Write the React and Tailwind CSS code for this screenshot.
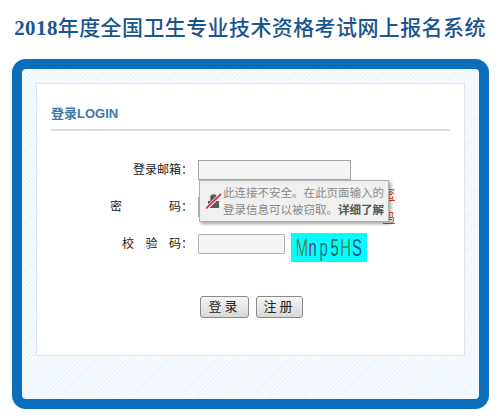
export default function App() {
  const cjk = { fontFamily: '"Noto Sans CJK SC", "Liberation Sans", sans-serif' };
  const letters = [
    ["M", "text-[#4f8a4f]"],
    ["n", "text-[#6a3a7a]"],
    ["p", "text-[#1f6f7f]"],
    ["5", "text-[#1f6a4a]"],
    ["H", "text-[#3a8a5a]"],
    ["S", "text-[#1f5a8a]"],
  ];
  return (
    <div className="w-[500px] h-[419px] bg-white overflow-hidden font-['Liberation_Sans','Noto_Sans_CJK_SC',sans-serif]">
      <h1 className="h-[59px] pt-[16px] text-center text-[21px] leading-[25px] font-medium tracking-[0.4px] text-[#1a5590] whitespace-nowrap font-['Liberation_Serif','Noto_Sans_CJK_SC',serif]">
        <span className="font-bold">2018</span>年度全国卫生专业技术资格考试网上报名系统
      </h1>
      <div className="ml-3 w-[477px] h-[350px] rounded-[14px] border-[10px] border-[#0a6ebd] shadow-[0_0_1px_#7fb3de] bg-[repeating-linear-gradient(135deg,#ebf3fb_0,#ebf3fb_1px,#f7fbff_1px,#f7fbff_3px)] px-[14px] pt-[14px]">
        <div className="h-[273px] bg-white border border-[#dde5ee] px-[14px] pt-[21px] text-[#222]">
          <div className="text-[13px] leading-[18px] font-bold text-[#3f77aa]">登录LOGIN</div>
          <div className="mt-[6px] h-[2px] bg-[#dddddd]" />
          <div className="relative">
            <div className="flex items-center mt-[29px] h-[20px]">
              <span className="w-[142px] text-right text-[12px] leading-[20px]">登录邮箱：</span>
              <div className="ml-[5px] w-[153px] h-[20px] bg-[#f4f4f4] border border-[#a8a8a8]" />
            </div>
            <div className="flex items-center mt-[17px] h-[20px]">
              <span className="w-[142px] flex justify-between pl-[59px] text-[12px] leading-[20px]">
                <span>密</span>
                <span>码：</span>
              </span>
              <div className="ml-[5px] w-[153px] h-[20px] bg-[#f4f4f4] border border-[#a8a8a8]" />
              <a className="ml-[32px] w-[12px] text-[12px] leading-[23px] text-[#e8401c] underline">密码</a>
            </div>
            <div className="flex items-center mt-[17px] h-[20px]">
              <span className="w-[142px] flex justify-between pl-[71px] text-[12px] leading-[20px]">
                <span>校</span>
                <span>验</span>
                <span>码：</span>
              </span>
              <div className="ml-[5px] w-[87px] h-[20px] bg-[#f4f4f4] border border-[#b4b4b4] rounded-[1px]" />
              <div className="ml-[6px] w-[76px] h-[29px] mt-[7px] bg-[#00ffff] flex items-center pl-[5px] text-[24px] leading-[29px]">
                {letters.map(([c, k], i) => (
                  <span key={i} className={`w-[11px] flex justify-center ${k}`}>
                    <span className="inline-block scale-x-[0.62]">{c}</span>
                  </span>
                ))}
              </div>
            </div>
            <div className="flex mt-[42px] ml-[149px] gap-[7px]">
              <button className="w-[49px] h-[22px] rounded-[3px] border border-[#8a8a8a] bg-gradient-to-b from-[#f6f6f6] to-[#d8d8d8] text-[13px] leading-[20px] tracking-[3px] text-[#222]">登录</button>
              <button className="w-[47px] h-[22px] rounded-[3px] border border-[#8a8a8a] bg-gradient-to-b from-[#f6f6f6] to-[#d8d8d8] text-[13px] leading-[20px] tracking-[3px] text-[#222]">注册</button>
            </div>
            <div className="absolute left-[148px] top-[20px] w-[190px] h-[42px] bg-[#f0f0f0] border border-[#b0b0b0] shadow-[2px_2px_3px_rgba(0,0,0,0.35)] flex items-center pl-[6px]">
              <svg width="16" height="16" viewBox="0 0 16 16" className="shrink-0">
                <path d="M2 8h11v7H2z" fill="#5a5a5a" />
                <path d="M5 8V4.5a2.5 2.5 0 0 1 5 0V8" fill="#5a5a5a" stroke="#5a5a5a" strokeWidth="1.5" />
                <path d="M0 16L15 1" stroke="#f0f0f0" strokeWidth="3.5" />
                <path d="M0 15.5L15 1" stroke="#ee2a55" strokeWidth="1.8" />
              </svg>
              <div style={cjk} className="ml-[1px] text-[11.5px] leading-[17px] text-[#8a8a8a] whitespace-nowrap">
                <div>此连接不安全。在此页面输入的</div>
                <div>登录信息可以被窃取。<span className="font-bold text-[#555]">详细了解</span></div>
              </div>
            </div>
          </div>
        </div>
      </div>
    </div>
  );
}
